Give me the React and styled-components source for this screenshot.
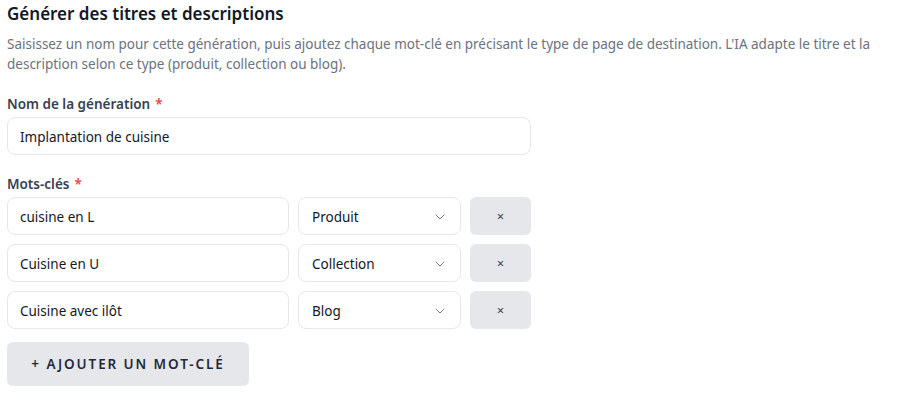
import React from "react";
import styled, { createGlobalStyle } from "styled-components";
import { ChevronDown } from "lucide-react";

const GlobalStyle = createGlobalStyle`
  html, body {
    margin: 0;
    padding: 0;
    background: #ffffff;
  }
  body {
    font-family: "Noto Sans", "Open Sans", Arial, sans-serif;
    color: #111827;
  }
  * {
    box-sizing: border-box;
  }
`;

const Page = styled.div`
  padding: 1px 0 0 7px;
  width: 890px;
`;

const Title = styled.h2`
  margin: 0;
  font-size: 17px;
  font-weight: 600;
  line-height: 26px;
  color: #111827;
`;

const Description = styled.p`
  margin: 7px 0 0;
  font-size: 13.5px;
  line-height: 20px;
  color: #6b7280;
`;

const Field = styled.div`
  margin-top: ${props => props.top}px;
`;

const Label = styled.label`
  display: block;
  font-size: 13.5px;
  font-weight: 600;
  line-height: 20px;
  color: #374151;
  margin-bottom: 3px;
  .required {
    color: #ef4444;
    margin-left: 5px;
  }
`;

const TextBox = styled.input`
  display: block;
  width: ${props => props.width || "100%"};
  height: 38px;
  padding: 1px 12px 0;
  border: 1px solid #e5e7eb;
  border-radius: 8px;
  background: #fff;
  font-family: inherit;
  font-size: 13.5px;
  color: #111827;
  outline: none;
`;

const Rows = styled.div`
  display: flex;
  flex-direction: column;
  gap: 9px;
`;

const KeywordRow = styled.div`
  display: grid;
  grid-template-columns: 282px 163px 61px;
  column-gap: 9px;
`;

const SelectBox = styled.div`
  height: 38px;
  border: 1px solid #e5e7eb;
  border-radius: 8px;
  background: #fff;
  display: flex;
  align-items: center;
  justify-content: space-between;
  padding: 1px 12px 0 13px;
  font-size: 13.5px;
  color: #111827;
  svg {
    color: #6b7280;
  }
`;

const RemoveButton = styled.button`
  height: 38px;
  border: none;
  border-radius: 6px;
  background: #e5e7eb;
  color: #374151;
  font-family: inherit;
  font-size: 13px;
  cursor: pointer;
`;

const AddButton = styled.button`
  margin-top: 13px;
  width: 242px;
  height: 44px;
  border: none;
  border-radius: 6px;
  background: #e5e7eb;
  color: #1f2937;
  font-family: inherit;
  font-size: 13.5px;
  font-weight: 600;
  letter-spacing: 1.9px;
  text-transform: uppercase;
  cursor: pointer;
`;

const keywords = [
  { id: 1, text: "cuisine en L", type: "Produit" },
  { id: 2, text: "Cuisine en U", type: "Collection" },
  { id: 3, text: "Cuisine avec ilôt", type: "Blog" }
];

const App = () => (
  <>
    <GlobalStyle />
    <Page>
      <Title>Générer des titres et descriptions</Title>
      <Description>
        Saisissez un nom pour cette génération, puis ajoutez chaque mot-clé en
        précisant le type de page de destination. L'IA adapte le titre et la
        description selon ce type (produit, collection ou blog).
      </Description>

      <Field top={20}>
        <Label>
          Nom de la génération<span className="required">*</span>
        </Label>
        <TextBox width="524px" defaultValue="Implantation de cuisine" />
      </Field>

      <Field top={19}>
        <Label>
          Mots-clés<span className="required">*</span>
        </Label>
        <Rows>
          {keywords.map(kw => (
            <KeywordRow key={kw.id}>
              <TextBox defaultValue={kw.text} />
              <SelectBox>
                <span>{kw.type}</span>
                <ChevronDown size={16} strokeWidth={1.4} />
              </SelectBox>
              <RemoveButton>×</RemoveButton>
            </KeywordRow>
          ))}
        </Rows>
      </Field>

      <AddButton>+ Ajouter un mot-clé</AddButton>
    </Page>
  </>
);

export default App;
